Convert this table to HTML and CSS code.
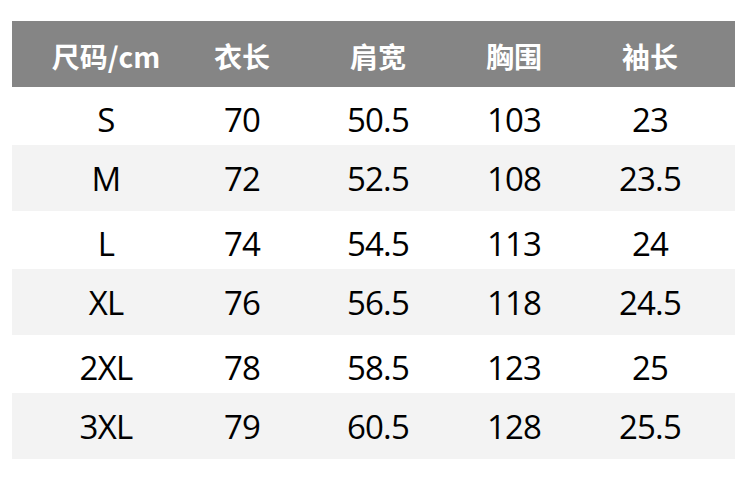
FILE: index.html
```html
<!DOCTYPE html>
<html lang="zh">
<head>
<meta charset="utf-8">
<title>尺码表</title>
<link rel="stylesheet" href="styles.css">
</head>
<body>
<div class="table">
  <div class="row head">
    <div>尺码/cm</div><div>衣长</div><div>肩宽</div><div>胸围</div><div>袖长</div>
  </div>
  <div class="row light"><div>S</div><div>70</div><div>50.5</div><div>103</div><div>23</div></div>
  <div class="row shade"><div>M</div><div>72</div><div>52.5</div><div>108</div><div>23.5</div></div>
  <div class="row light"><div>L</div><div>74</div><div>54.5</div><div>113</div><div>24</div></div>
  <div class="row shade"><div>XL</div><div>76</div><div>56.5</div><div>118</div><div>24.5</div></div>
  <div class="row light"><div>2XL</div><div>78</div><div>58.5</div><div>123</div><div>25</div></div>
  <div class="row shade"><div>3XL</div><div>79</div><div>60.5</div><div>128</div><div>25.5</div></div>
</div>
</body>
</html>
```
FILE: styles.css
```css
html, body {
  margin: 0;
  padding: 0;
  background: #ffffff;
}
body {
  padding: 21px 15px 0 12px;
  font-family: "Open Sans", "Noto Sans", "Noto Sans CJK SC", sans-serif;
}
.table {
  display: flex;
  flex-direction: column;
  width: 723px;
}
.row {
  display: grid;
  grid-template-columns: repeat(5, 136px);
  padding-left: 26px;
  align-items: center;
  color: #000000;
  font-size: 33px;
  letter-spacing: -0.8px;
}
.row > div {
  text-align: center;
}
.head {
  height: 66px;
  background: #858585;
  color: #ffffff;
  font-family: "Noto Sans CJK SC", sans-serif;
  font-weight: 700;
  font-size: 28px;
  letter-spacing: 0;
  padding-top: 4px;
  box-sizing: border-box;
}
.light {
  height: 58px;
  background: #ffffff;
  padding-top: 6px;
  box-sizing: border-box;
}
.shade {
  height: 66px;
  background: #f3f3f3;
}
```
